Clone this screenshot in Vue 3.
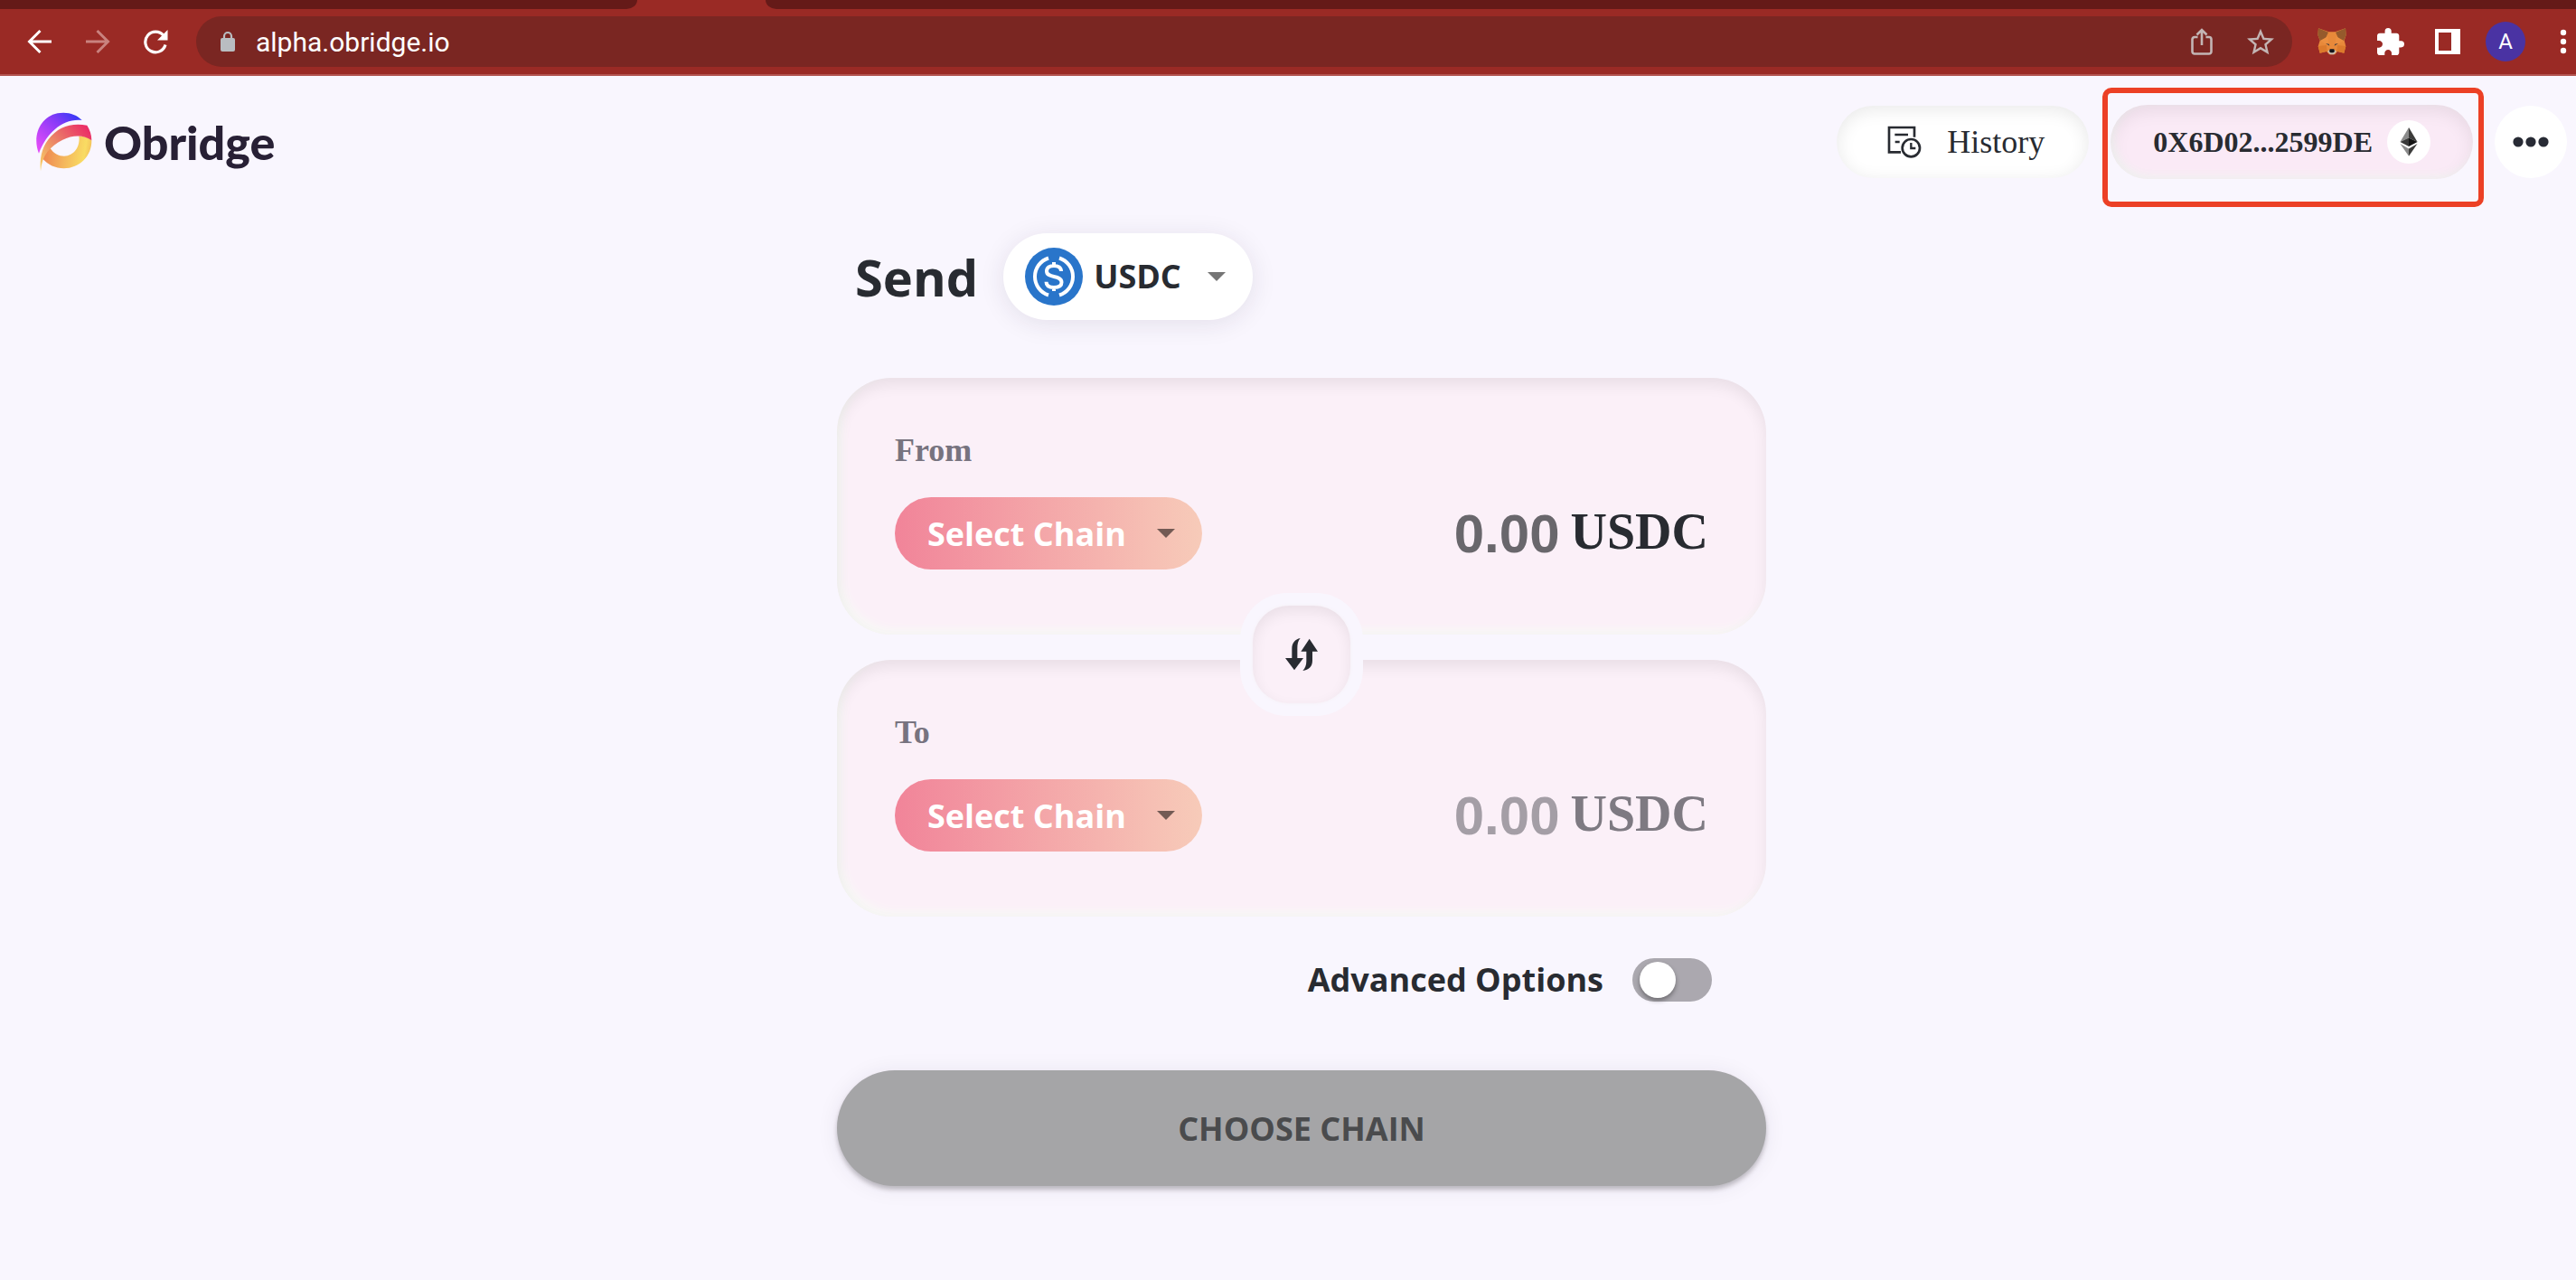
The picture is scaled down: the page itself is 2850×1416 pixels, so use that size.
<script setup>
import { ref } from 'vue'

const url = ref('alpha.obridge.io')
const token = ref('USDC')
const advanced = ref(false)
const panels = ref([
  { id: 'from', label: 'From', chain: 'Select Chain', amount: '', locked: false },
  { id: 'to', label: 'To', chain: 'Select Chain', amount: '', locked: true },
])
</script>

<template>
  <div class="page">
    <div class="browser">
      <div class="tabs">
        <div class="tab-left"></div>
        <div class="tab-right"></div>
      </div>
      <div class="toolbar">
        <button class="nav" aria-label="Back">
          <svg width="28" height="28" viewBox="0 0 28 28" fill="none" stroke="#fff" stroke-width="3"><path d="M27 14H3M14.500 2L2.500 14l12 12" /></svg>
        </button>
        <button class="nav" aria-label="Forward">
          <svg width="28" height="28" viewBox="0 0 28 28" fill="none" stroke="#c9827e" stroke-width="3"><path d="M1 14h24M13.500 2l12 12-12 12" /></svg>
        </button>
        <button class="nav" aria-label="Reload">
          <svg width="28" height="28" viewBox="0 0 28 28"><path d="M23 7.500A11.300 11.300 0 1 0 25 17.500" fill="none" stroke="#fff" stroke-width="3.200" /><path d="M27.500 1v11.500H16z" fill="#fff" /></svg>
        </button>
        <div class="address">
          <svg width="18" height="24" viewBox="0 0 18 24"><rect x="1" y="8" width="16" height="15" rx="2" fill="#b9bdc1" /><path d="M5 9V6a4 4 0 0 1 8 0v3" fill="none" stroke="#b9bdc1" stroke-width="2.200" /></svg>
          <input v-model="url" class="url" type="text" aria-label="Address" />
          <button class="in-bar" aria-label="Share">
            <svg width="24" height="30" viewBox="0 0 24 30" fill="none" stroke="#c3b5b4" stroke-width="2.600"><path d="M7.500 10H4a2.500 2.500 0 0 0-2.500 2.500V26A2.500 2.500 0 0 0 4 28.500h16a2.500 2.500 0 0 0 2.500-2.500V12.500A2.500 2.500 0 0 0 20 10h-3.500M12 19V2.500M6.500 7.500L12 2l5.500 5.500" /></svg>
          </button>
          <button class="in-bar" aria-label="Bookmark">
            <svg width="30" height="30" viewBox="2 1.500 20 20" fill="#c3b5b4"><path d="M22 9.240l-7.190-.62L12 2 9.190 8.630 2 9.240l5.460 4.730L5.820 21 12 17.270 18.180 21l-1.630-7.030L22 9.240zM12 15.400l-3.760 2.270 1-4.280-3.320-2.880 4.380-.38L12 6.100l1.710 4.040 4.380.38-3.320 2.880 1 4.280L12 15.400z" /></svg>
          </button>
        </div>
        <div class="extensions">
          <button aria-label="Wallet extension">
            <svg width="32" height="30" viewBox="0 0 94 90">
              <path d="M2 1l35 12h20L92 1l2 22-6 18 5 20-6 22-22-5-8 10H38l-9-10-22 5-6-22 6-20L0 23z" fill="#e8893a" />
              <path d="M2 1l33 13-9 20-18 9-8-20zM92 1L59 14l9 20 18 9 8-20z" fill="#955a2c" />
              <path d="M8 42l25-14 3 22-9 4zM86 42L61 28l-3 22 9 4z" fill="#ec8f40" />
              <path d="M1 60l28-3 2 20-24 6zM93 60l-28-3-2 20 24 6z" fill="#dc7a2c" />
              <path d="M26 51l11 2 2 6zM68 51l-11 2-2 6z" fill="#3a3a42" />
              <path d="M32 78l8-7h14l8 7-9 10H41z" fill="#cfc0b2" />
              <path d="M40 70h14l2 8-5 4h-8l-5-4z" fill="#15151a" />
            </svg>
          </button>
          <button aria-label="Extensions">
            <svg width="30" height="30" viewBox="2 1 21 21" fill="#fff"><path d="M20.500 11H19V7c0-1.100-.9-2-2-2h-4V3.500a2.500 2.500 0 0 0-5 0V5H4c-1.100 0-1.990.9-1.990 2v3.800H3.500c1.490 0 2.700 1.210 2.700 2.700s-1.210 2.700-2.700 2.700H2V20c0 1.100.9 2 2 2h3.800v-1.500c0-1.490 1.210-2.700 2.700-2.700s2.700 1.210 2.700 2.700V22H17c1.100 0 2-.9 2-2v-4h1.500a2.500 2.500 0 0 0 0-5z" /></svg>
          </button>
          <button aria-label="Side panel">
            <svg width="28" height="28" viewBox="0 0 28 28"><path d="M0 0h28v28H0zM4 4v20h14V4z" fill="#fff" fill-rule="evenodd" /></svg>
          </button>
          <button class="avatar" aria-label="Profile">A</button>
          <button class="menu" aria-label="Browser menu">
            <svg width="8" height="28" viewBox="0 0 8 28" fill="#fff"><circle cx="4" cy="4" r="3.200" /><circle cx="4" cy="14" r="3.200" /><circle cx="4" cy="24" r="3.200" /></svg>
          </button>
        </div>
      </div>
    </div>

    <header class="header">
      <a class="brand" href="#">
        <svg width="65" height="68" viewBox="55 65 195 204">
          <defs>
            <linearGradient id="violet" x1="0" y1="1" x2="1" y2="0"><stop offset="0.100" stop-color="#e04bf8" /><stop offset="0.600" stop-color="#8a3af8" /><stop offset="1" stop-color="#2138f5" /></linearGradient>
            <linearGradient id="rose" x1="0" y1="1" x2="1" y2="0.200"><stop offset="0" stop-color="#fbd765" /><stop offset="0.300" stop-color="#f0a466" /><stop offset="0.550" stop-color="#ea7a68" /><stop offset="1" stop-color="#eb2f66" /></linearGradient>
            <linearGradient id="gold" x1="0" y1="0.500" x2="1" y2="0.600"><stop offset="0" stop-color="#ee8350" /><stop offset="0.450" stop-color="#f4b55c" /><stop offset="0.850" stop-color="#f9dc63" /><stop offset="1" stop-color="#f2bc5a" /></linearGradient>
          </defs>
          <path d="M70 205C47 148 74 84 132 72c32-6 62 3 81 23C150 88 96 136 70 205z" fill="url(#violet)" />
          <path d="M107 187c12 18 29 27 47 27 32-1 54-31 49-66 18 0 32 4 42 14 1 52-40 93-92 93-28 0-53-12-71-33 7-16 16-27 25-35z" fill="url(#gold)" />
          <path d="M76 264c-4-42 3-76 26-106 31-41 76-56 128-46 9 14 15 31 15 50-26-20-64-18-96-2-42 22-69 50-73 104z" fill="url(#rose)" />
        </svg>
        <span>Obridge</span>
      </a>
      <div class="actions">
        <button class="history">
          <svg width="40" height="38" viewBox="0 0 120 114" fill="none" stroke="#282b31" stroke-width="8">
            <path d="M48 91H9V9h84v32M28 33h44M29 57h15" />
            <circle cx="82" cy="77" r="29" />
            <path d="M82 60v18h15" stroke-width="7" />
          </svg>
          <span>History</span>
        </button>
        <div class="account-wrap">
          <button class="account">
            <span>0X6D02...2599DE</span>
            <span class="chain">
              <svg width="20" height="32" viewBox="0 0 56 94">
                <path d="M28 0v34L0 47z" fill="#8b8b8b" /><path d="M28 0v34l28 13z" fill="#3c3c3b" />
                <path d="M28 34v28L0 47z" fill="#393939" /><path d="M28 34v28l28-15z" fill="#141414" />
                <path d="M0 53l28 16v24z" fill="#8b8b8b" /><path d="M56 53L28 69v24z" fill="#3c3c3b" />
              </svg>
            </span>
          </button>
          <div class="marker"></div>
        </div>
        <button class="more" aria-label="More">
          <svg width="40" height="12" viewBox="0 0 40 12" fill="#282b35"><circle cx="6" cy="6" r="5.600" /><circle cx="20" cy="6" r="5.600" /><circle cx="34" cy="6" r="5.600" /></svg>
        </button>
      </div>
    </header>

    <main class="main">
      <div class="send">
        <label for="token">Send</label>
        <div class="token">
          <svg width="64" height="64" viewBox="0 0 64 64" fill="none" stroke="#fff">
            <circle cx="32" cy="32" r="32" fill="#2975ca" stroke="none" />
            <path d="M26 11.500a21.500 21.500 0 0 0 0 41M38 11.500a21.500 21.500 0 0 1 0 41" stroke-width="4" />
            <path d="M40 26c0-4-3.500-6-8-6s-8 2-8 6 3.500 5 8 6 8.500 2 8.500 6.200S37 44 32 44s-8.500-2-8.500-6.200M32 16v5M32 43v5" stroke-width="4" />
          </svg>
          <select id="token" v-model="token"><option>USDC</option></select>
          <svg class="caret" width="20" height="10" viewBox="0 0 20 10"><path d="M0 0h20L10 10z" fill="#757575" /></svg>
        </div>
      </div>

      <div class="panels">
        <section v-for="p in panels" :key="p.id" class="panel">
          <label class="side" :for="p.id + '-chain'">{{ p.label }}</label>
          <div class="row">
            <div class="chain-select">
              <select :id="p.id + '-chain'" v-model="p.chain"><option>Select Chain</option></select>
              <svg class="caret" width="20" height="10" viewBox="0 0 20 10"><path d="M0 0h20L10 10z" fill="#735a54" /></svg>
            </div>
            <div class="amount" :class="{ locked: p.locked }">
              <input :id="p.id + '-amount'" v-model="p.amount" type="text" placeholder="0.00" :disabled="p.locked" />
              <label :for="p.id + '-amount'">{{ token }}</label>
            </div>
          </div>
        </section>
        <div class="swap">
          <button aria-label="Swap direction">
            <svg width="36" height="36" viewBox="0 0 108 108" fill="#282b31">
              <path d="M50 0C32 4 22 16 22 34v32H0l30 40 30-40H40V34c0-14 2-26 10-34z" />
              <path d="M80 2L52 44h18v32c0 14-4 24-12 32 20-4 32-14 32-34V44h18z" />
            </svg>
          </button>
        </div>
      </div>

      <label class="advanced">
        <span>Advanced Options</span>
        <input v-model="advanced" type="checkbox" role="switch" />
      </label>

      <button class="choose" disabled>CHOOSE CHAIN</button>
    </main>
  </div>
</template>

<style>
body {
  background: #f9f6fe;
}
</style>

<style scoped>
.page {
  --ink: #282b31;
  padding-bottom: 80px;
  color: var(--ink);
  font-family: "Open Sans", "Noto Sans", sans-serif;
}
button,
input,
select {
  margin: 0;
  padding: 0;
  border: 0;
  background: none;
  color: inherit;
  font: inherit;
  appearance: none;
  outline: 0;
}
select,
button {
  cursor: pointer;
}
svg {
  display: block;
  flex: none;
}

.browser {
  background: #9a2a25;
  border-bottom: 2px solid #b35450;
}
.tabs {
  display: flex;
  justify-content: space-between;
  gap: 142px;
  height: 10px;
}
.tab-left,
.tab-right {
  background: #651a18;
}
.tab-left {
  width: 705px;
  border-bottom-right-radius: 12px 10px;
}
.tab-right {
  flex: 1;
  border-bottom-left-radius: 12px 10px;
}
.toolbar {
  display: flex;
  align-items: center;
  height: 72px;
  padding: 0 10px 0 30px;
}
.nav {
  margin-right: 36px;
}
.nav:nth-child(3) {
  margin-right: 31px;
}
.address {
  flex: 1;
  display: flex;
  align-items: center;
  height: 56px;
  padding: 0 20px 0 26px;
  border-radius: 28px;
  background: #7a2622;
}
.url {
  flex: 1;
  min-width: 0;
  margin-left: 22px;
  color: #fff;
  font-family: Roboto, sans-serif;
  font-size: 30px;
}
.in-bar {
  margin-left: 38px;
}
.extensions {
  display: flex;
  align-items: center;
  margin-left: 28px;
  gap: 34px;
}
.avatar {
  width: 44px;
  height: 44px;
  margin-left: -6px;
  border-radius: 50%;
  background: #4a33a3;
  color: #fff;
  font-family: Roboto, sans-serif;
  font-size: 24px;
}
.menu {
  margin-left: 4px;
}

.header {
  display: flex;
  align-items: center;
  justify-content: space-between;
  padding: 32px 10px 0 38px;
}
.brand {
  display: flex;
  align-items: center;
  gap: 12px;
  color: #282035;
  font-family: Lato, sans-serif;
  font-size: 52px;
  font-weight: 900;
  line-height: 68px;
  text-decoration: none;
}
.actions {
  display: flex;
  align-items: center;
  gap: 24px;
  font-family: "Liberation Serif", serif;
}
.history {
  display: flex;
  align-items: center;
  gap: 27px;
  height: 80px;
  padding: 0 49px 0 55px;
  border-radius: 40px;
  background: #fff;
  box-shadow: inset 0 4px 20px rgba(0, 0, 0, 0.09);
  font-size: 36px;
}
.account-wrap {
  position: relative;
}
.account {
  display: flex;
  align-items: center;
  gap: 16px;
  height: 82px;
  padding: 0 47px;
  border-radius: 41px;
  background: #faeaf6;
  box-shadow: inset 0 6px 20px rgba(0, 0, 0, 0.08), inset 4px -4px 8px #f6f6f6;
  font-size: 32px;
  font-weight: 700;
}
.chain {
  display: flex;
  align-items: center;
  justify-content: center;
  width: 48px;
  height: 48px;
  border-radius: 50%;
  background: #fff;
}
.marker {
  position: absolute;
  inset: -19px -12px -31px -9px;
  border: 6px solid #ec4025;
  border-radius: 10px;
  pointer-events: none;
}
.more {
  display: flex;
  align-items: center;
  justify-content: center;
  width: 80px;
  height: 80px;
  border-radius: 50%;
  background: #fff;
}

.main {
  width: 1028px;
  max-width: 100%;
  margin: 60px auto 0;
  padding-left: 30px;
}
.send {
  display: flex;
  align-items: center;
  gap: 28px;
  padding-left: 20px;
  font-size: 56px;
  font-weight: 700;
  line-height: 72px;
}
.token {
  position: relative;
  display: flex;
  align-items: center;
  width: 276px;
  height: 96px;
  box-sizing: border-box;
  padding-left: 24px;
  border-radius: 48px;
  background: #fff;
  box-shadow: 0 4px 28px rgba(40, 30, 60, 0.1);
}
.token select {
  flex: 1;
  align-self: stretch;
  padding-left: 12px;
  font-size: 36px;
  font-weight: 700;
}
.caret {
  position: absolute;
  right: 30px;
  pointer-events: none;
}
.panels {
  position: relative;
  display: flex;
  flex-direction: column;
  gap: 28px;
  margin-top: 64px;
}
.panel {
  padding: 56px 64px 72px;
  border-radius: 60px;
  background: #fbf0f8;
  box-shadow: inset 0 8px 16px rgba(0, 0, 0, 0.07), inset 6px -6px 8px #f8f8f6;
}
.side {
  display: block;
  margin-bottom: 28px;
  color: #77737f;
  font-family: "Liberation Serif", serif;
  font-size: 36px;
  font-weight: 700;
  line-height: 48px;
}
.row {
  display: flex;
  align-items: center;
  justify-content: space-between;
}
.chain-select {
  position: relative;
  display: flex;
  align-items: center;
  width: 340px;
  height: 80px;
  border-radius: 40px;
  background: linear-gradient(90deg, #f18499, #f7cbb9);
}
.chain-select select {
  width: 100%;
  height: 100%;
  padding-left: 36px;
  color: #fff;
  font-size: 36px;
  font-weight: 700;
}
.amount {
  display: flex;
  align-items: flex-start;
  gap: 12px;
  font-family: "Liberation Serif", serif;
  font-size: 56px;
  font-weight: 700;
  line-height: 76px;
}
.amount input {
  width: 240px;
  height: 80px;
  font-family: "Liberation Sans", sans-serif;
  font-size: 60px;
  text-align: right;
}
.amount input::placeholder {
  color: #69676c;
  opacity: 1;
}
.amount.locked {
  color: #7e7a82;
}
.amount.locked input::placeholder {
  color: #a49ea6;
}
.swap {
  position: absolute;
  top: 50%;
  left: 50%;
  display: flex;
  align-items: center;
  justify-content: center;
  width: 136px;
  height: 136px;
  margin: -60px 0 0 -68px;
  border-radius: 52px;
  background: #f9f6fe;
}
.swap button {
  display: flex;
  align-items: center;
  justify-content: center;
  width: 108px;
  height: 108px;
  border-radius: 40px;
  background: #fbf0f8;
  box-shadow: inset 0 6px 16px rgba(0, 0, 0, 0.07), 0 0 4px #f6f1f6;
}

.advanced {
  display: flex;
  align-items: center;
  justify-content: flex-end;
  gap: 32px;
  margin-top: 46px;
  padding-right: 60px;
  font-size: 36px;
  font-weight: 700;
  line-height: 48px;
}
.advanced input {
  width: 88px;
  height: 48px;
  padding: 4px 8px;
  box-sizing: border-box;
  border-radius: 24px;
  background: #aba8af;
}
.advanced input::before {
  content: "";
  display: block;
  width: 40px;
  height: 40px;
  border-radius: 50%;
  background: #fff;
  box-shadow: 0 3px 5px rgba(0, 0, 0, 0.35);
}
.advanced input:checked::before {
  margin-left: 32px;
}
.choose {
  width: 100%;
  height: 128px;
  margin-top: 76px;
  border-radius: 64px;
  background: #a5a5a7;
  box-shadow: 0 4px 5px rgba(0, 0, 0, 0.22), 0 2px 24px rgba(40, 30, 60, 0.08);
  color: #4a4b4d;
  font-size: 36px;
  font-weight: 700;
}
</style>
